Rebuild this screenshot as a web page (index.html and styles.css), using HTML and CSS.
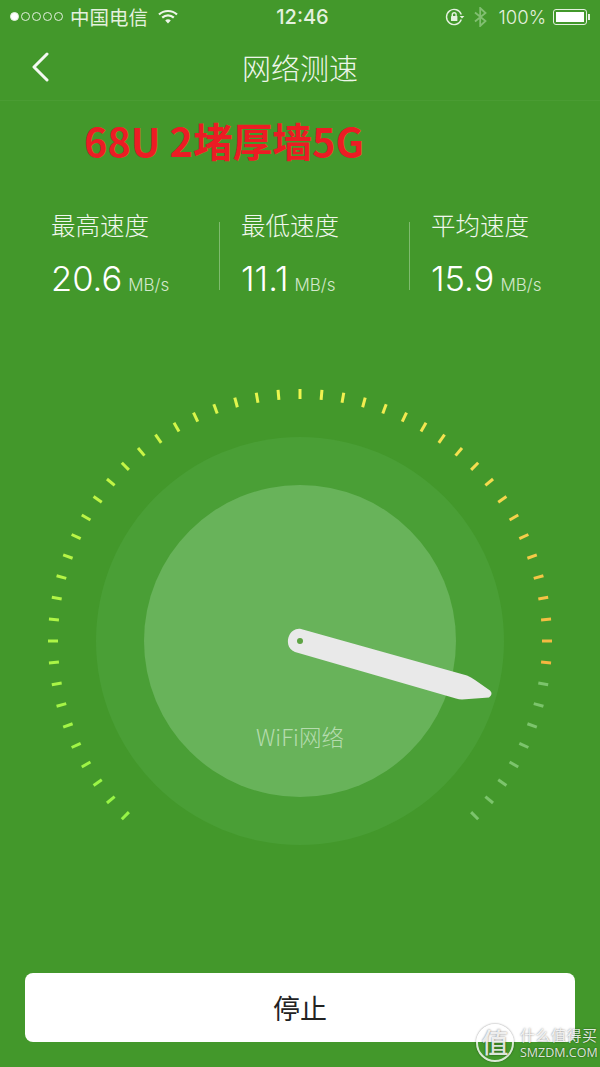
FILE: index.html
```html
<!DOCTYPE html>
<html lang="zh-CN">
<head>
  <meta charset="UTF-8">
  <meta name="viewport" content="width=device-width, initial-scale=1">
  <title>网络测速</title>
  <link rel="stylesheet" href="styles.css">
</head>
<body>

<div class="screen">
  <div class="status-bar">
    <div class="status-left">
      <span class="signal"><i class="on"></i><i></i><i></i><i></i><i></i></span>
      <span class="carrier">中国电信</span>
      <svg class="wifi" width="20" height="16" viewBox="0 0 20 16">
        <path d="M1 5.5 C6 0.8 14 0.8 19 5.5" />
        <path d="M4.2 8.6 C7.5 5.6 12.5 5.6 15.8 8.6" />
        <path class="wifi-dot" d="M7.2 11.4 C8.8 10 11.2 10 12.8 11.4 L10 14.6 Z" />
      </svg>
    </div>
    <div class="status-time">12:46</div>
    <div class="status-right">
      <svg class="rotation" width="20" height="18" viewBox="0 0 20 18">
        <path d="M16.3 11.5 A7.6 7.6 0 1 1 16.3 6.5" />
        <rect x="6" y="8" width="6.4" height="5" rx="0.6" />
        <path class="lock-loop" d="M7.3 8 V6.6 A1.9 1.9 0 0 1 11.1 6.6 V8" />
        <path class="arrow" d="M14.6 8 H19.4 L17 10.6 Z" />
      </svg>
      <svg class="bluetooth" width="13" height="20" viewBox="0 0 13 20">
        <path d="M1 5.5 L11.5 14 L6.2 19 V1 L11.5 6 L1 14.5" />
      </svg>
      <span class="battery-text">100%</span>
      <span class="battery"><span class="battery-fill"></span></span>
    </div>
  </div>

  <header class="nav">
    <svg class="back" width="20" height="30" viewBox="0 0 20 30">
      <path d="M16 2 L3 15 L16 28" />
    </svg>
    <h1>网络测速</h1>
  </header>

  <div class="note">68U 2堵厚墙5G</div>

  <section class="stats">
    <div class="stat">
      <div class="stat-label">最高速度</div>
      <div class="stat-value">20.6<small>MB/s</small></div>
    </div>
    <div class="stat">
      <div class="stat-label">最低速度</div>
      <div class="stat-value">11.1<small>MB/s</small></div>
    </div>
    <div class="stat">
      <div class="stat-label">平均速度</div>
      <div class="stat-value">15.9<small>MB/s</small></div>
    </div>
  </section>

  <svg class="gauge" id="gauge" width="600" height="480" viewBox="0 380 600 480">
    <circle class="ring-outer" cx="300" cy="641" r="204" />
    <circle class="ring-inner" cx="300" cy="641" r="156" />
    <g id="ticks"></g>
    <text class="gauge-label" x="300" y="746">WiFi网络</text>
    <path class="needle" d="M301 629 L467 675.5 Q471 677 475 680 L490 690.5 Q493.5 694 489 697.5 L462 699.5 Q459 699.5 456 698.6 L295 652 C287 649 287 640 289 636 C291 631 296 628 301 629 Z" />
    <circle class="needle-dot" cx="300" cy="641" r="3" />
  </svg>

  <button class="stop">停止</button>

  <div class="watermark">
    <span class="wm-badge">值</span>
    <div class="wm-text">
      <span class="wm-cn">什么值得买</span>
      <span class="wm-en">SMZDM.COM</span>
    </div>
  </div>
</div>

<script src="script.js"></script>
</body>
</html>
```

FILE: styles.css
```css
* {
  box-sizing: border-box;
}
body {
  margin: 0;
  font-family: "Noto Sans CJK SC", "Noto Sans", sans-serif;
  background: #43982b;
  color: white;
}
.screen {
  position: relative;
  width: 600px;
  height: 1067px;
  overflow: hidden;
  background: #43982b;
}

/* status bar */
.status-bar {
  display: flex;
  align-items: center;
  justify-content: space-between;
  height: 33px;
  padding: 0 5px 0 10px;
  color: #e4f1df;
}
.status-left, .status-right {
  display: flex;
  align-items: center;
  width: 240px;
}
.status-right {
  justify-content: flex-end;
}
.signal {
  display: flex;
  gap: 2px;
}
.signal i {
  width: 9px;
  height: 9px;
  border: 1px solid #e4f1df;
  border-radius: 50%;
}
.signal .on {
  background: white;
}
.carrier {
  margin-left: 7px;
  font-size: 19.5px;
  line-height: 24px;
}
.wifi {
  margin-left: 10px;
  fill: none;
  stroke: #eef6ea;
  stroke-width: 2.2;
}
.wifi .wifi-dot {
  fill: #eef6ea;
  stroke: none;
}
.status-time {
  font-family: Inter, sans-serif;
  font-size: 20px;
  font-weight: 500;
}
.rotation {
  fill: none;
  stroke: #e4f1df;
  stroke-width: 1.4;
}
.rotation rect, .rotation .arrow {
  fill: #e4f1df;
  stroke: none;
}
.bluetooth {
  margin-left: 9px;
  fill: none;
  stroke: #82bf72;
  stroke-width: 1.8;
}
.battery-text {
  margin-left: 12px;
  font-family: Inter, sans-serif;
  font-size: 18.5px;
  font-weight: 300;
}
.battery {
  position: relative;
  width: 34px;
  height: 16px;
  margin: 0 8px 0 7px;
  padding: 2px;
  border: 1px solid #e4f1df;
  border-radius: 3px;
}
.battery::after {
  content: "";
  position: absolute;
  right: -4px;
  top: 4px;
  width: 2px;
  height: 6px;
  background: #e4f1df;
}
.battery-fill {
  display: block;
  height: 100%;
  background: white;
}

/* nav */
.nav {
  position: relative;
  display: flex;
  align-items: center;
  justify-content: center;
  height: 68px;
  border-bottom: 1px solid #4a9c33;
}
.nav h1 {
  margin: 0;
  font-size: 29px;
  font-weight: 300;
  line-height: 68px;
  color: #eef6ea;
}
.back {
  position: absolute;
  left: 31px;
  top: 19px;
  fill: none;
  stroke: #f4f9f2;
  stroke-width: 3;
  stroke-linecap: round;
  stroke-linejoin: round;
}

.note {
  margin: 14px 0 0 84px;
  font-size: 39.7px;
  font-weight: 700;
  line-height: 50px;
  white-space: nowrap;
  color: #ec1c24;
}

/* stats */
.stats {
  display: grid;
  grid-template-columns: repeat(3, 190px);
  margin: 57px 0 0 29px;
}
.stat {
  height: 68px;
  padding-left: 21px;
  border-left: 1px solid #7fbb6e;
}
.stat:first-child {
  border-left-color: transparent;
}
.stat-label {
  margin-top: -15px;
  font-size: 24.5px;
  font-weight: 300;
  line-height: 36px;
  color: #f0f7ed;
}
.stat-value {
  margin-top: 16px;
  font-family: Inter, sans-serif;
  font-size: 34.5px;
  font-weight: 300;
  line-height: 40px;
  white-space: nowrap;
}
.stat-value small {
  margin-left: 6px;
  font-size: 17px;
  color: #d3e8cc;
}

/* gauge */
.gauge {
  display: block;
  margin-top: 90px;
}
.ring-outer {
  fill: #4a9f36;
}
.ring-inner {
  fill: #68b35a;
}
.tick {
  stroke-width: 3;
}
.gauge-label {
  font-size: 22.5px;
  font-weight: 300;
  text-anchor: middle;
  fill: #b5dcae;
}
.needle {
  fill: #e9e9e9;
}
.needle-dot {
  fill: #5da343;
}

/* button */
.stop {
  display: block;
  width: 550px;
  height: 69px;
  margin: 113px 0 0 25px;
  padding: 0;
  border: none;
  border-radius: 8px;
  background: white;
  font-family: inherit;
  font-size: 27px;
  color: #222;
}

/* watermark, sits half over the white button so it needs a shadow to show */
.watermark {
  position: absolute;
  left: 476px;
  top: 1024px;
  display: flex;
  align-items: center;
  gap: 6px;
  color: rgba(255, 255, 255, 0.85);
  text-shadow: 0 0 2px rgba(0, 0, 0, 0.55);
}
.wm-badge {
  width: 38px;
  height: 38px;
  border: 2px solid rgba(255, 255, 255, 0.8);
  border-radius: 50%;
  box-shadow: 0 0 2px rgba(0, 0, 0, 0.5);
  font-size: 27px;
  font-weight: 500;
  line-height: 32px;
  text-align: center;
}
.wm-text {
  display: flex;
  flex-direction: column;
}
.wm-cn {
  font-size: 15px;
  line-height: 19px;
  letter-spacing: 0.5px;
}
.wm-en {
  font-family: "Open Sans", sans-serif;
  font-size: 12.5px;
  line-height: 17px;
}
```

FILE: script.js
```js
// gauge ticks: 55 marks over 270 degrees, 5 degrees apart
const ticks = document.getElementById('ticks');
const stops = [
  [0, [150, 245, 70]],
  [18, [196, 245, 70]],
  [27, [240, 245, 80]],
  [36, [245, 222, 80]],
  [46, [245, 182, 64]]
];

function tickColor(i) {
  if (i > 46) return '#7cc46c';
  let n = 0;
  while (i > stops[n + 1][0]) n++;
  const [from, a] = stops[n];
  const [to, b] = stops[n + 1];
  const t = (i - from) / (to - from);
  const rgb = a.map((v, k) => Math.round(v + (b[k] - v) * t));
  return `rgb(${rgb.join(',')})`;
}

for (let i = 0; i < 55; i++) {
  const line = document.createElementNS('http://www.w3.org/2000/svg', 'line');
  line.setAttribute('class', 'tick');
  line.setAttribute('x1', 300);
  line.setAttribute('x2', 300);
  line.setAttribute('y1', 641 - 252);
  line.setAttribute('y2', 641 - 242);
  line.setAttribute('stroke', tickColor(i));
  line.setAttribute('transform', `rotate(${-135 + i * 5} 300 641)`);
  ticks.appendChild(line);
}
```
